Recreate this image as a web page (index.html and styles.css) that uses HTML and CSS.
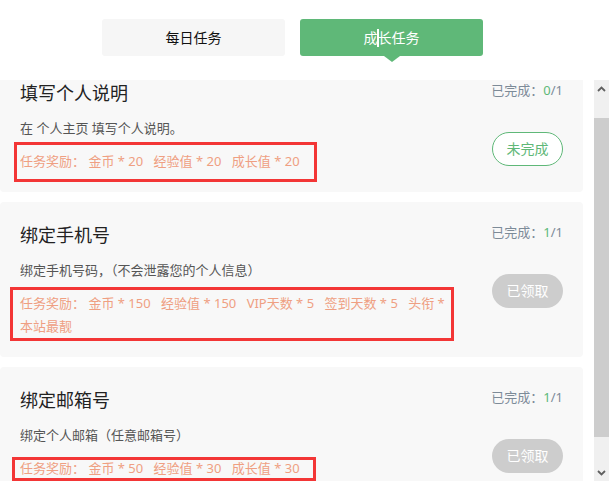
FILE: index.html
```html
<!DOCTYPE html>
<html lang="zh-CN">
<head>
<meta charset="utf-8">
<title>任务</title>
<link rel="stylesheet" href="styles.css">
</head>
<body>
<div class="page">
  <header class="tabs">
    <div class="tab">每日任务</div>
    <div class="tab tab-active">成<span class="caret"></span>长任务</div>
  </header>
  <div class="viewport">
    <div class="list">
      <div class="card">
        <div class="main">
          <div class="title">填写个人说明</div>
          <div class="desc">在 个人主页 填写个人说明。</div>
          <div class="reward"><span class="label">任务奖励：</span>
            <span class="item">金币 * 20</span>
            <span class="item">经验值 * 20</span>
            <span class="item">成长值 * 20</span>
          </div>
        </div>
        <div class="side">
          <div class="status">已完成：<span class="num">0</span>/1</div>
          <div class="btn btn-todo">未完成</div>
        </div>
        <div class="mark mark-1"></div>
      </div>
      <div class="card">
        <div class="main">
          <div class="title">绑定手机号</div>
          <div class="desc">绑定手机号码，（不会泄露您的个人信息）</div>
          <div class="reward"><span class="label">任务奖励：</span>
            <span class="item">金币 * 150</span>
            <span class="item">经验值 * 150</span>
            <span class="item">VIP天数 * 5</span>
            <span class="item">签到天数 * 5</span>
            <span class="item-part">头衔 *</span>
            <span class="item-part">本站最靓</span>
          </div>
        </div>
        <div class="side">
          <div class="status">已完成：<span class="num">1</span>/1</div>
          <div class="btn btn-done">已领取</div>
        </div>
        <div class="mark mark-2"></div>
      </div>
      <div class="card">
        <div class="main">
          <div class="title">绑定邮箱号</div>
          <div class="desc">绑定个人邮箱（任意邮箱号）</div>
          <div class="reward"><span class="label">任务奖励：</span>
            <span class="item">金币 * 50</span>
            <span class="item">经验值 * 30</span>
            <span class="item">成长值 * 30</span>
          </div>
        </div>
        <div class="side">
          <div class="status">已完成：<span class="num">1</span>/1</div>
          <div class="btn btn-done">已领取</div>
        </div>
        <div class="mark mark-3"></div>
      </div>
    </div>
    <div class="scrollbar">
      <div class="sb-btn">
        <svg width="9" height="6" viewBox="0 0 9 6"><path d="M1 5 L4.5 1.5 L8 5" fill="none" stroke="#606060" stroke-width="1.8"/></svg>
      </div>
      <div class="sb-track"><div class="sb-thumb"></div></div>
      <div class="sb-btn">
        <svg width="9" height="6" viewBox="0 0 9 6"><path d="M1 1 L4.5 4.5 L8 1" fill="none" stroke="#606060" stroke-width="1.8"/></svg>
      </div>
    </div>
  </div>
</div>
</body>
</html>
```
FILE: styles.css
```css
* { box-sizing: border-box; }
html, body {
  margin: 0;
  padding: 0;
  background: #fff;
}
body {
  font-family: "Noto Sans", "Noto Sans CJK SC", sans-serif;
  width: 610px;
  height: 488px;
  overflow: hidden;
}
.page {
  display: flex;
  flex-direction: column;
}
.tabs {
  height: 80px;
  display: flex;
  gap: 15px;
  padding: 19px 0 0 102px;
}
.tab {
  position: relative;
  width: 183px;
  height: 37px;
  border-radius: 3px;
  background: #f6f6f6;
  color: #111;
  font-size: 14px;
  line-height: 37px;
  text-align: center;
}
.tab-active {
  background: #5fb878;
  color: #fff;
}
.tab-active::after {
  content: "";
  position: absolute;
  left: 50%;
  bottom: -6px;
  margin-left: -8px;
  border-left: 8px solid transparent;
  border-right: 8px solid transparent;
  border-top: 6px solid #5fb878;
}
.caret {
  display: inline-block;
  width: 2px;
  height: 18px;
  margin: 0 -1px;
  background: #fff;
  vertical-align: -4px;
}
.viewport {
  width: 609px;
  height: 401px;
  display: flex;
}
.list {
  flex: 1;
  overflow: hidden;
}
.card {
  position: relative;
  width: 583px;
  margin-top: 10px;
  background: #f8f8f8;
  border-radius: 4px;
  display: flex;
  gap: 36px;
  padding: 20px 20px 19px 20px;
}
.card:first-child {
  margin-top: -20px;
}
.main {
  flex: 1;
  min-width: 0;
}
.title {
  font-size: 18px;
  line-height: 26px;
  color: #222;
}
.desc {
  margin-top: 11px;
  font-size: 13px;
  line-height: 22px;
  color: #555;
}
.reward {
  margin-top: 11px;
  font-size: 13px;
  line-height: 23px;
  color: #ef9f82;
}
.item {
  margin-right: 7px;
}
.side {
  width: 72px;
  display: flex;
  flex-direction: column;
  align-items: flex-end;
}
.status {
  font-size: 13px;
  line-height: 20px;
  color: #7d8b98;
  white-space: nowrap;
}
.num {
  color: #5fb878;
}
.btn {
  margin-top: 32px;
  width: 71px;
  height: 34px;
  border-radius: 17px;
  font-size: 14px;
  line-height: 34px;
  text-align: center;
}
.btn-todo {
  background: #fff;
  border: 1px solid #5fb878;
  line-height: 32px;
  color: #5fb878;
}
.btn-done {
  background: #cdcdcd;
  color: #fff;
}
.mark {
  position: absolute;
  border: 3px solid #f33636;
}
.mark-1 { left: 14px; top: 82px; width: 303px; height: 40px; }
.mark-2 { left: 10px; top: 85px; width: 444px; height: 54px; }
.mark-3 { left: 12px; top: 90px; width: 304px; height: 24px; }
.scrollbar {
  width: 15px;
  background: #f0f0f0;
  display: flex;
  flex-direction: column;
}
.sb-btn {
  height: 17px;
  display: flex;
  align-items: center;
  justify-content: center;
}
.sb-track {
  flex: 1;
  padding: 21px 0 27px;
  display: flex;
}
.sb-thumb {
  flex: 1;
  background: #cdcdcd;
}
```
